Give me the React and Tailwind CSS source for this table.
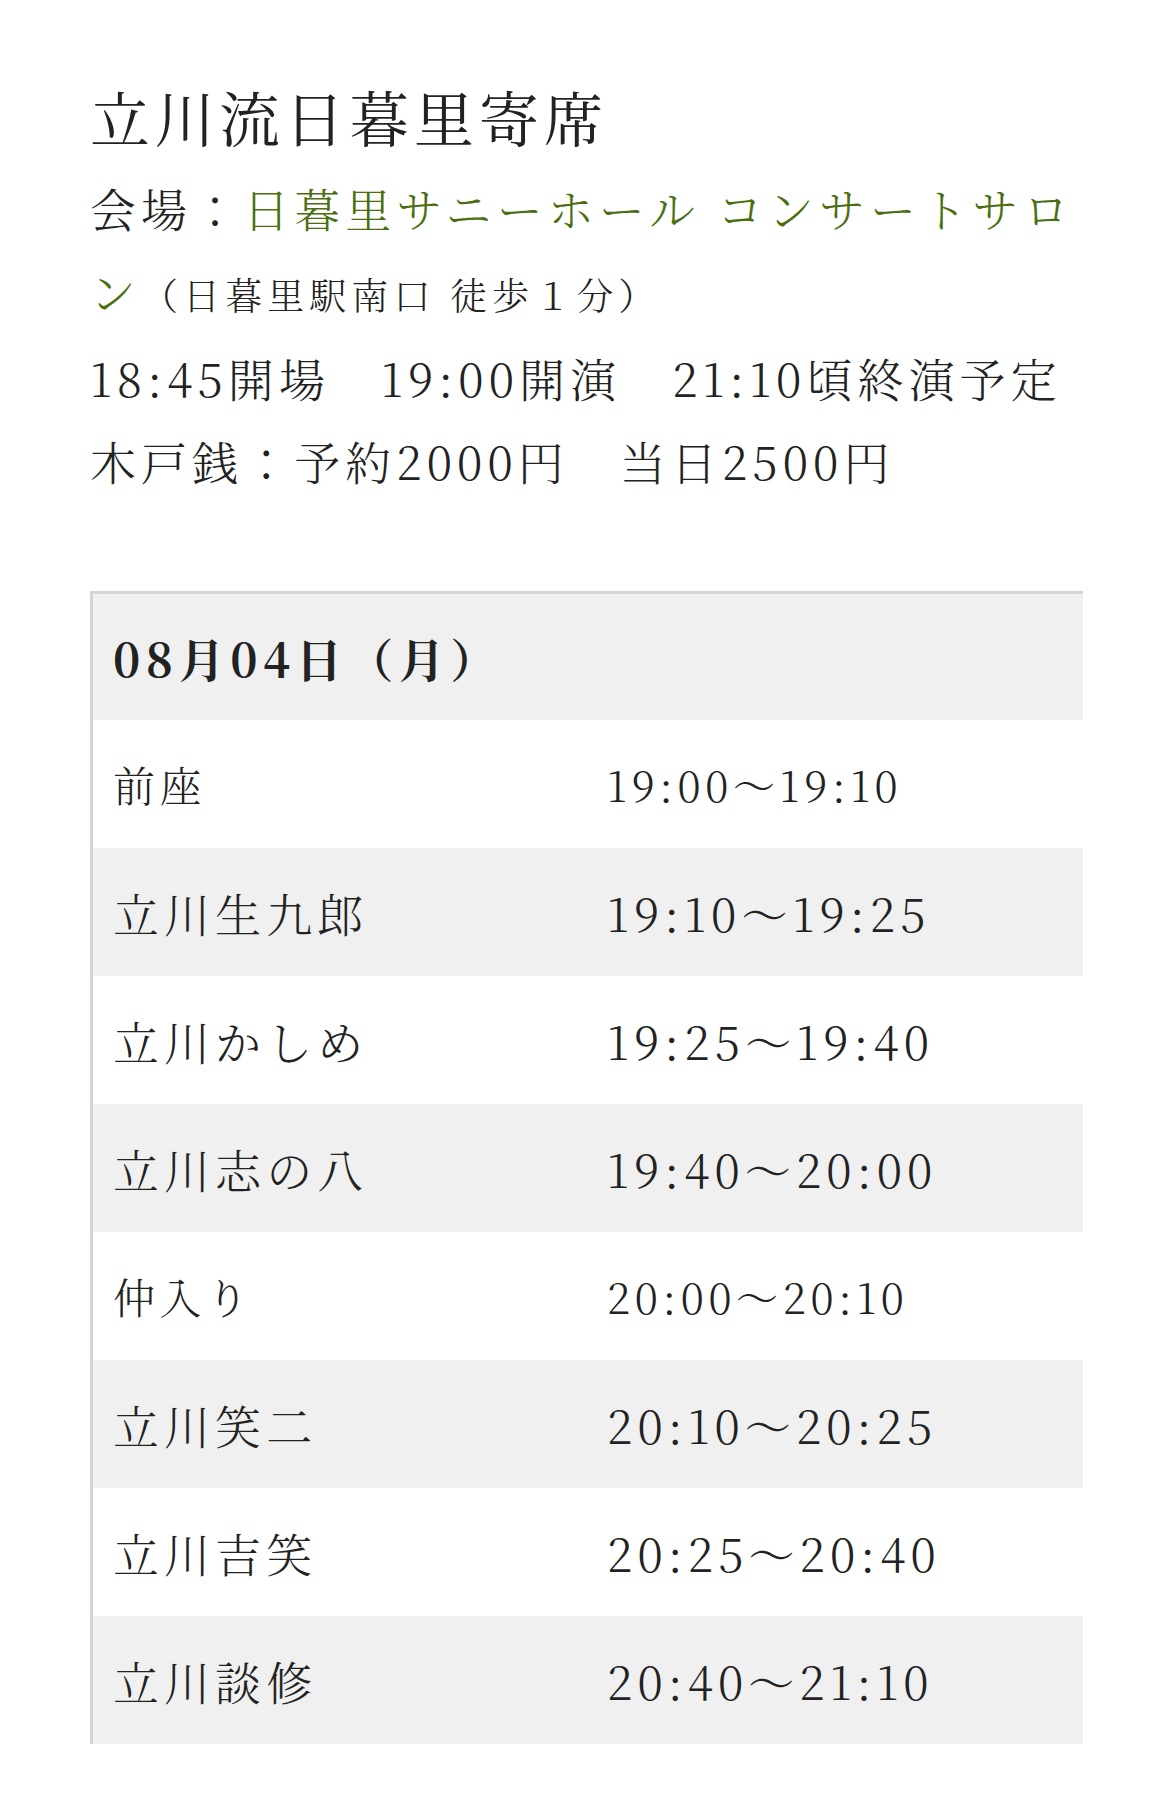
import React from "react";

const rows = [
  { name: "前座", time: "19:00〜19:10", small: true, gray: false },
  { name: "立川生九郎", time: "19:10〜19:25", small: false, gray: true },
  { name: "立川かしめ", time: "19:25〜19:40", small: false, gray: false },
  { name: "立川志の八", time: "19:40〜20:00", small: false, gray: true },
  { name: "仲入り", time: "20:00〜20:10", small: true, gray: false },
  { name: "立川笑二", time: "20:10〜20:25", small: false, gray: true },
  { name: "立川吉笑", time: "20:25〜20:40", small: false, gray: false },
  { name: "立川談修", time: "20:40〜21:10", small: false, gray: true },
];

export default function App() {
  return (
    <div className="min-h-[1805px] bg-white text-[#222222] pl-[90px] pr-[85px] pt-[76px] font-['Noto_Serif_CJK_JP','DejaVu_Serif_Condensed','Liberation_Serif','Noto_Sans_CJK_JP',serif] font-light">
      <h1 className="text-[60px] leading-[80px] tracking-[0.08em] font-normal">立川流日暮里寄席</h1>
      <div className="mt-[10px] text-[46px] leading-[83px] tracking-[0.11em]">
        <p>
          会場：<span className="text-[#4a6e10]">日暮里サニーホール コンサートサロン</span>
          <span className="text-[37px]">（日暮里駅南口 徒歩１分）</span>
        </p>
        <p>18:45開場　19:00開演　21:10頃終演予定</p>
        <p>木戸銭：予約2000円　当日2500円</p>
      </div>
      <div className="mt-[89px] w-[993px] border-l-[3px] border-t-[3px] border-[#d4d4d4]">
        <div className="h-[126px] bg-[#f0f0f0] flex items-center pl-[20px] text-[46px] font-bold tracking-[0.12em]">
          08月04日（月）
        </div>
        {rows.map((r) => (
          <div
            key={r.name}
            className={`h-[128px] grid grid-cols-2 items-center ${r.gray ? "bg-[#f0f0f0]" : "bg-white"} ${r.small ? "text-[42px]" : "text-[46px]"} tracking-[0.11em]`}
          >
            <div className="pl-[20px]">{r.name}</div>
            <div className="pl-[19px]">{r.time}</div>
          </div>
        ))}
      </div>
    </div>
  );
}
